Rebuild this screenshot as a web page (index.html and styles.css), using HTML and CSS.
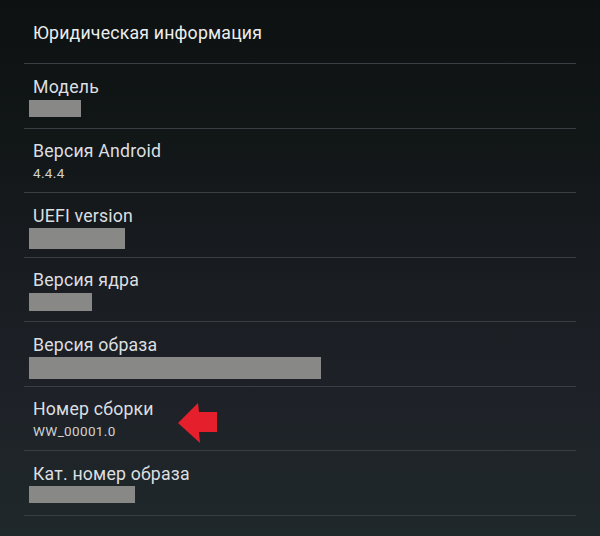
FILE: index.html
```html
<!DOCTYPE html>
<html lang="ru">
<head>
<meta charset="utf-8">
<title>Об устройстве</title>
<link rel="stylesheet" href="styles.css">
</head>
<body>
<main class="screen">
  <ul class="list">
    <li class="item item-title"><span class="label">Юридическая информация</span></li>
    <li class="item"><span class="label">Модель</span><span class="redact r-model"></span></li>
    <li class="item"><span class="label">Версия Android</span><span class="value">4.4.4</span></li>
    <li class="item"><span class="label">UEFI version</span><span class="redact r-uefi"></span></li>
    <li class="item"><span class="label">Версия ядра</span><span class="redact r-kernel"></span></li>
    <li class="item"><span class="label">Версия образа</span><span class="redact r-image"></span></li>
    <li class="item item-build"><span class="label">Номер сборки</span><span class="value">WW_00001.0</span>
      <svg class="arrow" width="42" height="42" viewBox="0 0 42 42" aria-hidden="true">
        <polygon points="0,20 20,0 21,9 39,9 39,29 21,29 22,40" fill="#e51f2b"/>
      </svg>
    </li>
    <li class="item"><span class="label">Кат. номер образа</span><span class="redact r-cat"></span></li>
  </ul>
</main>
</body>
</html>
```

FILE: styles.css
```css
html, body {
  margin: 0;
  padding: 0;
}
body {
  width: 600px;
  height: 536px;
  overflow: hidden;
  font-family: Roboto, "Noto Sans", "Liberation Sans", sans-serif;
  background: linear-gradient(180deg, #0d1112 0%, #111617 25%, #1a1d22 55%, #1e2228 75%, #1f282a 100%);
}
.screen {
  padding: 0 24px;
}
.list {
  list-style: none;
  margin: 0;
  padding: 0;
}
.item {
  position: relative;
  display: flex;
  flex-direction: column;
  align-items: flex-start;
  box-sizing: border-box;
  height: 64.5px;
  padding: 12.5px 0 0 9px;
  border-bottom: 1px solid #383e41;
}
.item-title {
  height: 64px;
  padding-top: 23px;
}
.label {
  font-size: 17.7px;
  line-height: 20px;
  color: #dcdfe0;
  letter-spacing: 0.2px;
}
.item-title .label {
  color: #eceeee;
}
.value {
  margin-top: 1.5px;
  font-size: 13.5px;
  line-height: 20px;
  letter-spacing: 0.35px;
  color: #cfd2d3;
}
.redact {
  display: block;
  margin-top: 3px;
  margin-left: -4px;
  background: #888886;
}
.r-model { width: 52px; height: 17px; }
.r-uefi { width: 96px; height: 21px; margin-top: 2px; }
.r-kernel { width: 63px; height: 18px; }
.r-image { width: 292px; height: 22px; margin-top: 2px; }
.r-cat { width: 106px; height: 17px; margin-top: 2px; }
.arrow {
  position: absolute;
  left: 154px;
  top: 16px;
}
```
